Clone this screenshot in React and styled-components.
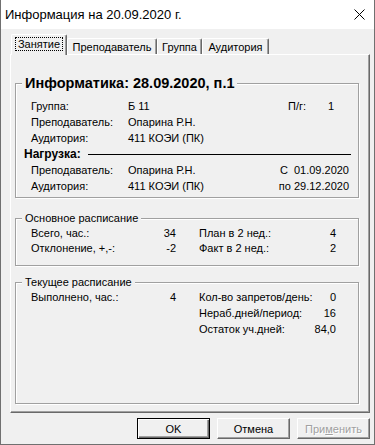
import React from 'react';
import styled, { createGlobalStyle } from 'styled-components';

const GlobalStyle = createGlobalStyle`
  html, body {
    margin: 0;
    padding: 0;
    background: #ffffff;
  }
`;

const Window = styled.div`
  width: 375px;
  height: 445px;
  box-sizing: border-box;
  border: 1px solid #707070;
  border-top: none;
  display: flex;
  flex-direction: column;
  font-family: "Liberation Sans", Arial, sans-serif;
  font-size: 11px;
  color: #000;
`;

const TitleBar = styled.div`
  height: 29px;
  flex: none;
  background: #ffffff;
  display: flex;
  align-items: center;
  justify-content: space-between;
  padding: 0 9px 0 4px;
  font-size: 13px;
`;

const Body = styled.div`
  flex: 1;
  background: #f0f0f0;
  padding: 5px 4px 5px 9px;
  display: flex;
  flex-direction: column;
`;

const TabStrip = styled.div`
  display: flex;
  align-items: flex-end;
  margin: 0 0 -1px 1px;
  position: relative;
  z-index: 1;
`;

const Tab = styled.div`
  box-sizing: border-box;
  width: ${(p) => p.$w}px;
  height: ${(p) => (p.$active ? 21 : 16)}px;
  margin-bottom: ${(p) => (p.$active ? 0 : 1)}px;
  background: #f0f0f0;
  border-top: 1px solid #ffffff;
  border-left: 1px solid #ffffff;
  border-right: 1px solid #696969;
  border-radius: 2px 2px 0 0;
  box-shadow: inset -1px 0 0 #a0a0a0;
  display: flex;
  align-items: center;
  justify-content: center;
  padding-bottom: ${(p) => (p.$active ? 3 : 0)}px;
  white-space: nowrap;
`;

const FocusRect = styled.span`
  display: block;
  box-sizing: border-box;
  height: 14px;
  padding: 0 2px;
  line-height: 12px;
  border: 1px dotted #000;
`;

const Panel = styled.div`
  height: 359px;
  box-sizing: border-box;
  border: 1px solid;
  border-color: #ffffff #696969 #696969 #ffffff;
  box-shadow: inset -1px -1px 0 #a0a0a0;
  padding: 19px 10px 8px 4px;
  display: flex;
  flex-direction: column;
`;

const Group = styled.fieldset`
  margin: ${(p) => p.$top || 0}px 0 0 0;
  padding: 0;
  min-width: 0;
  box-sizing: border-box;
  height: ${(p) => (p.$h ? `${p.$h}px` : 'auto')};
  border: 1px solid #a0a0a0;
  box-shadow: inset 1px 1px 0 #ffffff, 1px 1px 0 #ffffff;
  flex: ${(p) => (p.$grow ? 1 : 'none')};
`;

const Legend = styled.legend`
  margin-left: 6px;
  padding: 0 3px;
  background: #f0f0f0;
  font-size: ${(p) => (p.$big ? 14.5 : 11)}px;
  font-weight: ${(p) => (p.$big ? 700 : 400)};
  line-height: ${(p) => (p.$big ? 18 : 14)}px;
`;

const InfoGrid = styled.div`
  display: grid;
  grid-template-columns: 97px 1fr 70px;
  grid-auto-rows: 16px;
  line-height: 16px;
  padding: 6px 9px 3px 15px;
  white-space: nowrap;
`;

const Side = styled.div`
  display: flex;
  justify-content: ${(p) => (p.$end ? 'flex-end' : 'flex-start')};
  padding-left: ${(p) => (p.$end ? 0 : 9)}px;
  white-space: pre;
`;

const SideLabel = styled.span`
  width: 40px;
`;

const Heading = styled.div`
  grid-column: 1 / -1;
  margin: 0 -2px 0 -7px;
  display: flex;
  align-items: center;
  font-weight: 700;
  font-size: 12px;

  &::after {
    content: '';
    flex: 1;
    height: 1px;
    margin-left: 7px;
    background: #000;
  }
`;

const StatGrid = styled.div`
  display: grid;
  grid-template-columns: 145px 137px;
  column-gap: 23px;
  grid-auto-rows: ${(p) => p.$row}px;
  line-height: ${(p) => p.$row}px;
  padding: ${(p) => p.$pad || 0}px 0 0 15px;
  white-space: nowrap;
`;

const Stat = styled.div`
  grid-column: ${(p) => p.$col || 'auto'};
  display: flex;
  justify-content: space-between;
`;

const ButtonRow = styled.div`
  display: flex;
  justify-content: flex-end;
  gap: 7px;
  margin-top: 5px;
`;

const Button = styled.button`
  width: 73px;
  height: 21px;
  box-sizing: border-box;
  padding: 0;
  background: #f0f0f0;
  font-family: "Liberation Sans", Arial, sans-serif;
  font-size: 11px;
  color: ${(p) => (p.disabled ? '#a0a0a0' : '#000')};
  text-shadow: ${(p) => (p.disabled ? '1px 1px 0 #fff' : 'none')};
  border: 1px solid;
  border-color: ${(p) =>
    p.$default ? '#000' : '#ffffff #696969 #696969 #ffffff'};
  box-shadow: ${(p) =>
    p.$default
      ? 'inset 1px 1px 0 #fff, inset -1px -1px 0 #696969, inset -2px -2px 0 #a0a0a0'
      : 'inset -1px -1px 0 #a0a0a0'};

  u {
    text-decoration-thickness: 1px;
  }
`;

const CloseIcon = () => (
  <svg width="11" height="11" viewBox="0 0 11 11">
    <path d="M0.5 0.5 L10.5 10.5 M10.5 0.5 L0.5 10.5" stroke="#000" strokeWidth="1" fill="none" />
  </svg>
);

const tabs = [
  { title: 'Занятие', w: 56 },
  { title: 'Преподаватель', w: 90 },
  { title: 'Группа', w: 45 },
  { title: 'Аудитория', w: 67 },
];

export default function App() {
  return (
    <>
      <GlobalStyle />
      <Window>
        <TitleBar>
          <span>Информация на 20.09.2020 г.</span>
          <CloseIcon />
        </TitleBar>
        <Body>
          <TabStrip>
            {tabs.map((t, i) => (
              <Tab key={t.title} $w={t.w} $active={i === 0}>
                {i === 0 ? <FocusRect>{t.title}</FocusRect> : t.title}
              </Tab>
            ))}
          </TabStrip>
          <Panel>
            <Group>
              <Legend $big>Информатика: 28.09.2020, п.1</Legend>
              <InfoGrid>
                <span>Группа:</span>
                <span>Б 11</span>
                <Side>
                  <SideLabel>П/г:</SideLabel>
                  <span>1</span>
                </Side>
                <span>Преподаватель:</span>
                <span>Опарина Р.Н.</span>
                <span />
                <span>Аудитория:</span>
                <span>411 КОЭИ (ПК)</span>
                <span />
                <Heading>Нагрузка:</Heading>
                <span>Преподаватель:</span>
                <span>Опарина Р.Н.</span>
                <Side $end>С  01.09.2020</Side>
                <span>Аудитория:</span>
                <span>411 КОЭИ (ПК)</span>
                <Side $end>по 29.12.2020</Side>
              </InfoGrid>
            </Group>

            <Group $top={13} $h={55}>
              <Legend>Основное расписание</Legend>
              <StatGrid $row={15} $pad={1}>
                <Stat><span>Всего, час.:</span><span>34</span></Stat>
                <Stat><span>План в 2 нед.:</span><span>4</span></Stat>
                <Stat><span>Отклонение, +,-:</span><span>-2</span></Stat>
                <Stat><span>Факт в 2 нед.:</span><span>2</span></Stat>
              </StatGrid>
            </Group>

            <Group $top={9} $grow>
              <Legend>Текущее расписание</Legend>
              <StatGrid $row={16}>
                <Stat><span>Выполнено, час.:</span><span>4</span></Stat>
                <Stat><span>Кол-во запретов/день:</span><span>0</span></Stat>
                <Stat $col={2}><span>Нераб.дней/период:</span><span>16</span></Stat>
                <Stat $col={2}><span>Остаток уч.дней:</span><span>84,0</span></Stat>
              </StatGrid>
            </Group>
          </Panel>
          <ButtonRow>
            <Button $default>OK</Button>
            <Button>Отмена</Button>
            <Button disabled>
              При<u>м</u>енить
            </Button>
          </ButtonRow>
        </Body>
      </Window>
    </>
  );
}
